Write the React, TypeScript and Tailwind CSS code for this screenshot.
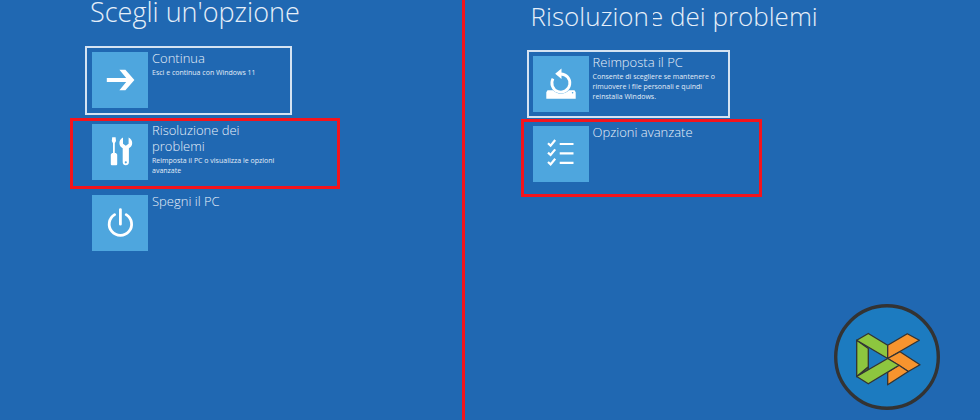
import React, { FunctionComponent, ReactNode } from "react"
import clsx from "clsx"

const ArrowIcon = () => (
  <svg viewBox="0 0 56 56" fill="currentColor" className="size-full">
    <path d="M14.8 26h19.4l-6.8-8.2h6l9 10.2-9 10.2h-6l6.8-8.2H14.8z" />
  </svg>
)

const ToolsIcon = () => (
  <svg viewBox="0 0 56 56" fill="currentColor" className="size-full">
    <path d="M20.2 13.2h3.4l.4 3.8-1.2 2.2V29h1.2l1.2 1.6v9.6q0 1-1 1h-4.4q-1 0-1-1v-9.6l1.2-1.6H21v-9.8L19.8 17z" />
    <path
      fillRule="evenodd"
      d="M31 13.6v6.2l2.8 2 2.8-2v-6.2c2.2.9 3.6 3 3.6 5.4 0 2.5-1.3 4.2-3.3 5.3v13.9c0 1.8-1.3 3-3.1 3s-3.1-1.2-3.1-3V24.3c-2-1.1-3.3-2.8-3.3-5.3 0-2.4 1.4-4.5 3.6-5.4zM33.8 37.2a1.1 1.1 0 100 2.2 1.1 1.1 0 000-2.2z"
    />
  </svg>
)

const PowerIcon = () => (
  <svg
    viewBox="0 0 56 56"
    fill="none"
    stroke="currentColor"
    strokeWidth="2.8"
    strokeLinecap="round"
    className="size-full"
  >
    <path d="M28.4 14.6v14.6M22.6 19.6a11.2 11.2 0 1011.6 0" />
  </svg>
)

const ResetIcon = () => (
  <svg viewBox="0 0 56 56" className="size-full">
    <path
      fill="currentColor"
      fillRule="evenodd"
      d="M14.5 34.3h5.6a10.8 10.8 0 0015.8 0h5.6l1.2 2v6.4H13.3v-6.4zM39.6 36a.8.8 0 100 1.6.8.8 0 000-1.6z"
    />
    <path
      fill="none"
      stroke="currentColor"
      strokeWidth="2.8"
      d="M27.6 18a9 9 0 11-7.6 4.6"
    />
    <path fill="currentColor" d="M22.2 17.7l6.3-5.2v10.4z" />
  </svg>
)

const ChecklistIcon = () => (
  <svg
    viewBox="0 0 56 56"
    fill="none"
    stroke="currentColor"
    strokeWidth="2.2"
    className="size-full"
  >
    <path d="M26.7 18h13.8M26.7 27.4h13.8M26.7 36.8h13.8" />
    <path d="M15 17.2l2.6 2.4 4.6-5.6M15 26.6l2.6 2.4 4.6-5.6M15 36l2.6 2.4 4.6-5.6" />
  </svg>
)

const Logo = () => (
  <svg
    viewBox="0 0 106 106"
    stroke="#333"
    strokeLinejoin="round"
    className="absolute right-10 bottom-2.5 size-[106px]"
    role="img"
    aria-label="DS"
  >
    <circle cx="53" cy="53" r="51.3" fill="#1c7bc0" strokeWidth="3.4" />
    <g strokeWidth="1.3">
      <path fill="#4b7d33" d="M22.7 72.5l11.6-9.7v3z" />
      <path fill="#8dc63f" d="M22.7 36.2l11.6 8.3v18.3l-11.6 9.7z" />
      <path fill="#8dc63f" d="M22.7 36.2l11.6-6.7 19.4 11.7v13.3z" />
      <path fill="#f7942e" d="M53.7 41.3l19.6-11.5 12 6.4-31.6 18.3z" />
      <path fill="#f7942e" d="M53.7 54.5L66 47.8l20 13-11.7 6.7z" />
      <path fill="#f7942e" d="M53.7 68.2L65 61.2l9.3 6.3-20.6 13.3z" />
      <path fill="#8dc63f" d="M22.7 72.5l31-18L65 61.2 34.3 79.8z" />
    </g>
  </svg>
)

interface OptionProps {
  icon: ReactNode
  title: string
  text?: string
  className?: string
}

const Option: FunctionComponent<OptionProps> = ({
  icon,
  title,
  text,
  className,
}) => (
  <button
    type="button"
    className={clsx("flex items-start gap-1 text-left", className)}
  >
    <span className="size-14 shrink-0 bg-[#4ea6de] text-white">{icon}</span>
    <span className="-mt-0.5 block w-[136px]">
      <span className="block text-[13px] leading-4 font-light text-[#e6eff9]">
        {title}
      </span>
      {text && (
        <span className="mt-0.5 block text-[7px] leading-[10px] text-[#e3edf8]">
          {text}
        </span>
      )}
    </span>
  </button>
)

const App: FunctionComponent = () => {
  return (
    <main className="relative flex min-h-screen bg-[#2068b2] font-['Open_Sans','Noto_Sans',sans-serif]">
      <section className="w-[47.1%] shrink-0 pl-[70px]">
        <h1 className="pl-5 text-[27px] leading-6 font-light whitespace-nowrap text-[#e6eff9]">
          Scegli un'opzione
        </h1>
        <div className="mt-[22px] flex flex-col items-start">
          <Option
            className="ml-[15px] w-[207px] border-2 border-[#d5e3f2] p-1 pb-[5px] pl-[5px]"
            icon={<ArrowIcon />}
            title="Continua"
            text="Esci e continua con Windows 11"
          />
          <Option
            className="mt-[3px] w-[270px] border-3 border-[#f5141c] py-[3px] pb-[6px] pl-[19px]"
            icon={<ToolsIcon />}
            title="Risoluzione dei problemi"
            text="Reimposta il PC o visualizza le opzioni avanzate"
          />
          <Option
            className="mt-[6px] ml-[22px]"
            icon={<PowerIcon />}
            title="Spegni il PC"
          />
        </div>
      </section>

      <section className="flex-1 border-l-3 border-[#f5141c] pl-14">
        <h1 className="pt-1 pl-[10px] text-[26px] leading-6 font-light whitespace-nowrap text-[#e6eff9]">
          Risoluzion
          <span className="relative">
            e
            <span className="absolute bottom-1 left-0 h-5 w-1 bg-[#2068b2]" />
          </span>{" "}
          dei problemi
        </h1>
        <div className="mt-[22px] flex flex-col items-start">
          <Option
            className="ml-1.5 w-[203px] border-2 border-[#d5e3f2] p-1"
            icon={<ResetIcon />}
            title="Reimposta il PC"
            text="Consente di scegliere se mantenere o rimuovere i file personali e quindi reinstalla Windows."
          />
          <Option
            className="mt-px w-[241px] border-3 border-[#f5141c] pt-1 pb-3 pl-[9px]"
            icon={<ChecklistIcon />}
            title="Opzioni avanzate"
          />
        </div>
      </section>

      <Logo />
    </main>
  )
}

export default App
